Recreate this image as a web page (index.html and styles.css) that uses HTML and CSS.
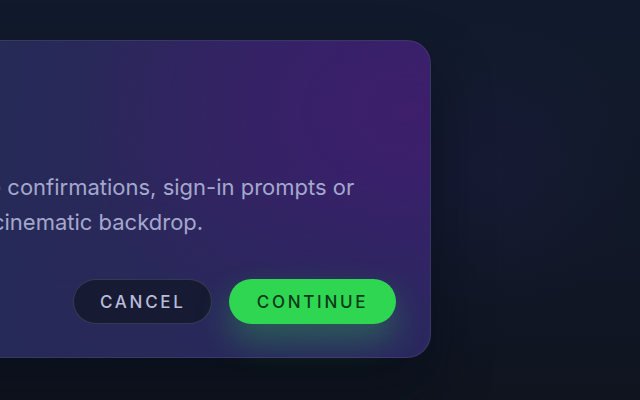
FILE: index.html
```html
<!DOCTYPE html>
<html lang="en">
<head>
  <meta charset="UTF-8">
  <meta name="viewport" content="width=device-width, initial-scale=1.0">
  <title>Cinematic Dialog</title>
  <link rel="stylesheet" href="styles.css">
</head>
<body>
  <div class="stage">
    <div class="dialog" role="dialog" aria-labelledby="dialogTitle">
      <p class="eyebrow">Modal preview</p>
      <h2 id="dialogTitle">Ready when you are</h2>
      <p class="body-text">
        A focused surface for destructive confirmations, sign-in prompts or<br>
        any moment that deserves a full cinematic backdrop.
      </p>
      <div class="actions">
        <button class="btn btn-ghost">Cancel</button>
        <button class="btn btn-primary">Continue</button>
      </div>
    </div>
  </div>
</body>
</html>
```

FILE: styles.css
```css
html, body {
  margin: 0;
  height: 100%;
}
body {
  font-family: Inter, 'Noto Sans', sans-serif;
  background:
    radial-gradient(circle at 490px 170px, rgba(50, 36, 110, 0.16), transparent 150px),
    linear-gradient(180deg, #111a2c 0%, #111828 55%, #0f141f 100%);
  overflow: hidden;
}
.stage {
  padding-top: 40px;
}
.dialog {
  box-sizing: border-box;
  width: 815px;
  margin-left: -384px;
  padding: 36px 34px 33px 36px;
  border-radius: 24px;
  border: 1px solid rgba(255, 255, 255, 0.08);
  background:
    linear-gradient(180deg, transparent 40%, rgba(38, 42, 88, 0.65) 100%),
    radial-gradient(ellipse 330px 240px at 790px 70px, rgba(62, 30, 108, 0.9), transparent),
    linear-gradient(95deg, #242a54 0%, #252a56 45%, #2b275b 65%, #32236a 100%);
  box-shadow: 0 30px 60px rgba(5, 8, 20, 0.45);
}
.eyebrow {
  margin: 0 0 14px;
  font-size: 13px;
  line-height: 18px;
  letter-spacing: 0.14em;
  text-transform: uppercase;
  color: #8f93c0;
}
h2 {
  margin: 0 0 21px;
  font-size: 30px;
  line-height: 40px;
  font-weight: 600;
  color: #eef0ff;
}
.body-text {
  margin: 0;
  font-size: 22px;
  line-height: 35px;
  color: #a4a8cd;
}
.actions {
  display: flex;
  justify-content: flex-end;
  gap: 17px;
  margin-top: 39px;
}
.btn {
  height: 45px;
  padding: 0 26px;
  border-radius: 23px;
  font-family: inherit;
  font-size: 17px;
  font-weight: 500;
  letter-spacing: 0.16em;
  text-transform: uppercase;
  cursor: pointer;
}
.btn-ghost {
  width: 139px;
  background-color: #161a33;
  border: 1px solid rgba(255, 255, 255, 0.14);
  color: #b9bdd9;
}
.btn-primary {
  width: 167px;
  background-color: #2fd651;
  border: none;
  color: #0b3a1b;
  box-shadow: 0 16px 34px rgba(47, 214, 81, 0.32);
}
```
